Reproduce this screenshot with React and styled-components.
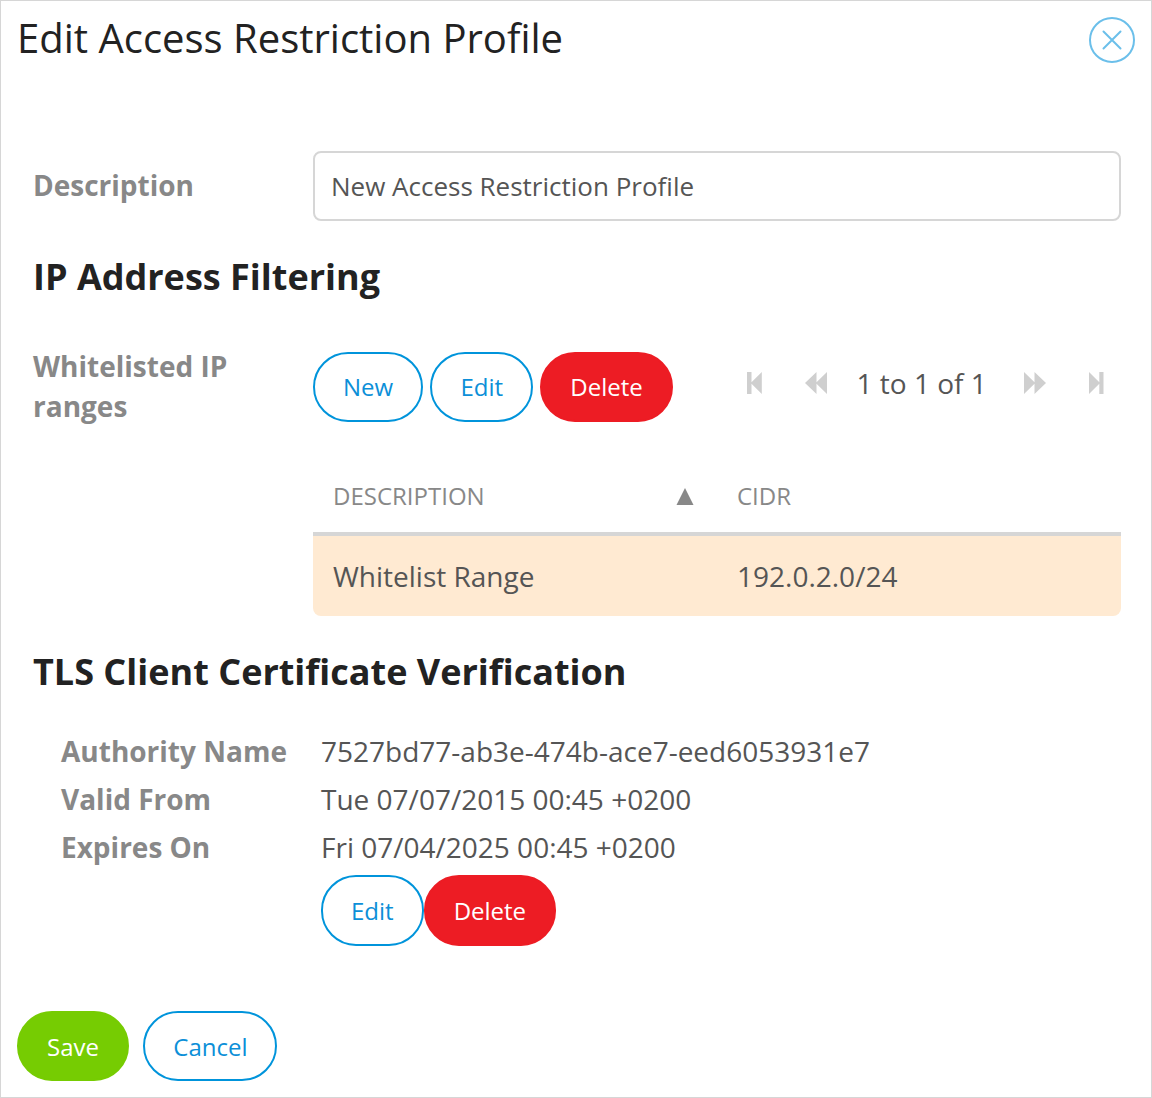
import React from 'react';
import styled, { createGlobalStyle, css } from 'styled-components';

const GlobalStyle = createGlobalStyle`
  *, *::before, *::after { box-sizing: border-box; }
  body { margin: 0; background: #fff; }
  button, input { font: inherit; }
`;

const Dialog = styled.main`
  display: flex;
  flex-direction: column;
  width: 1152px;
  height: 1098px;
  border: 1px solid #d6d6d6;
  background: #fff;
  color: #555;
  font-family: 'Open Sans', 'Noto Sans', sans-serif;
  font-size: 28px;
  line-height: 40px;
`;

const Header = styled.header`
  display: flex;
  justify-content: space-between;
  height: 150px;
  padding: 9px 16px 0 16px;
`;

const Title = styled.h1`
  margin: 0;
  color: #222;
  font-size: 40px;
  font-weight: 400;
  line-height: 56px;
`;

const CloseButton = styled.button`
  width: 46px;
  height: 46px;
  margin-top: 7px;
  padding: 0;
  border: 0;
  background: none;
  svg { display: block; }
`;

const Body = styled.div`
  flex: 1;
  padding: 0 30px 0 32px;
`;

const Field = styled.div`
  display: grid;
  grid-template-columns: 280px minmax(0, 1fr);
  align-items: ${(p) => p.$align || 'start'};
`;

const Label = styled.label`
  width: 230px;
  padding-bottom: 2px;
  color: #888;
  font-weight: 700;
`;

const TextInput = styled.input`
  width: 100%;
  height: 70px;
  padding: 0 16px;
  border: 2px solid #d6d6d6;
  border-radius: 8px;
  outline: 0;
  background: #fff;
  color: #555;
  font-size: 26px;
`;

const SectionTitle = styled.h2`
  margin: ${(p) => p.$margin};
  color: #222;
  font-size: 36px;
  font-weight: 700;
  line-height: 50px;
`;

const Toolbar = styled.div`
  display: flex;
  align-items: flex-start;
  justify-content: space-between;
  margin-top: 6px;
`;

const ButtonGroup = styled.div`
  display: flex;
  gap: ${(p) => p.$gap || 0}px;
`;

const variants = {
  outline: css`border-color: #0094db; background: #fff; color: #0c8fd8;`,
  danger: css`border-color: #ed1c24; background: #ed1c24; color: #fff;`,
  success: css`border-color: #76cc02; background: #76cc02; color: #fff;`,
};

const Button = styled.button`
  height: ${(p) => p.$height || 70}px;
  padding: ${(p) => p.$drop || 0}px 28px 0;
  border: 2px solid;
  border-radius: 35px;
  font-size: 24px;
  line-height: 34px;
  white-space: nowrap;
  ${(p) => variants[p.$variant || 'outline']}
`;

const Pager = styled.nav`
  display: flex;
  align-items: center;
  height: 62px;
  padding-right: 17.5px;
  color: #555;
`;

const PageIcon = styled.svg`
  display: block;
  flex: none;
  fill: #cfcfcf;
`;

const PageText = styled.span`
  width: 128px;
  margin: 0 39px 1px 29.5px;
  white-space: nowrap;
`;

const Gap = styled.span`
  width: ${(p) => p.$size}px;
`;

const Table = styled.div`
  margin-top: 35px;
`;

const TableRow = styled.div`
  display: grid;
  grid-template-columns: 1fr 1fr;
  align-items: center;
`;

const TableHead = styled(TableRow)`
  height: 79px;
  padding-top: 2px;
  border-bottom: 4px solid #d6d6d6;
  color: #888;
  font-size: 24px;
`;

const SelectedRow = styled(TableRow)`
  height: 80px;
  border-radius: 0 0 8px 8px;
  background: #ffead2;
`;

const Cell = styled.div`
  display: flex;
  justify-content: space-between;
  align-items: center;
  padding: 0 23px 0 20px;
`;

const SortIcon = styled.svg`
  display: block;
  margin-top: 2px;
  fill: #888;
`;

const Details = styled.dl`
  display: grid;
  grid-template-columns: 260px 1fr;
  margin: 0 0 0 28px;
  line-height: 48px;
`;

const Term = styled.dt`
  color: #888;
  font-weight: 700;
`;

const Value = styled.dd`
  margin: 0;
`;

const CertificateActions = styled.div`
  margin: 4px 0 0 288px;
`;

const Footer = styled.footer`
  display: flex;
  gap: 14.3px;
  padding: 0 0 16px 16px;
`;

const certificate = [
  ['Authority Name', '7527bd77-ab3e-474b-ace7-eed6053931e7'],
  ['Valid From', 'Tue 07/07/2015 00:45 +0200'],
  ['Expires On', 'Fri 07/04/2025 00:45 +0200'],
];

function FirstIcon({ flip }) {
  return (
    <PageIcon width="15" height="22" viewBox="0 0 15 22">
      <path d={flip ? 'M0 0L10.3 10.3V0H14.5V22H10.3V11.7L0 22Z' : 'M0 0H4.5V10.3L14.8 0V22L4.5 11.7V22H0Z'} />
    </PageIcon>
  );
}

function SkipIcon({ flip }) {
  return (
    <PageIcon width="22" height="22" viewBox="0 0 22 22">
      <path d={flip ? 'M0 0L10.5 10.3V0L22 11L10.5 22V11.7L0 22Z' : 'M22 0L11.5 10.3V0L0 11L11.5 22V11.7L22 22Z'} />
    </PageIcon>
  );
}

export default function App() {
  return (
    <>
      <GlobalStyle />
      <Dialog>
        <Header>
          <Title>Edit Access Restriction Profile</Title>
          <CloseButton aria-label="Close">
            <svg width="46" height="46" viewBox="0 0 46 46" fill="none" stroke="#6bbfea" strokeWidth="2">
              <circle cx="23" cy="23" r="22" />
              <path d="M14.5 14.5L31.5 31.5M31.5 14.5L14.5 31.5" strokeLinecap="round" />
            </svg>
          </CloseButton>
        </Header>
        <Body>
          <Field $align="center">
            <Label htmlFor="description">Description</Label>
            <TextInput id="description" defaultValue="New Access Restriction Profile" />
          </Field>
          <SectionTitle $margin="31px 0 44px">IP Address Filtering</SectionTitle>
          <Field>
            <Label as="div">Whitelisted IP ranges</Label>
            <div>
              <Toolbar>
                <ButtonGroup $gap={7.28}>
                  <Button>New</Button>
                  <Button>Edit</Button>
                  <Button $variant="danger">Delete</Button>
                </ButtonGroup>
                <Pager>
                  <FirstIcon />
                  <Gap $size={43.2} />
                  <SkipIcon />
                  <PageText>1 to 1 of 1</PageText>
                  <SkipIcon flip />
                  <Gap $size={43} />
                  <FirstIcon flip />
                </Pager>
              </Toolbar>
              <Table>
                <TableHead>
                  <Cell>
                    <span>DESCRIPTION</span>
                    <SortIcon width="18" height="17" viewBox="0 0 18 17"><path d="M9 0L17.5 17H0.5Z" /></SortIcon>
                  </Cell>
                  <Cell>CIDR</Cell>
                </TableHead>
                <SelectedRow>
                  <Cell>Whitelist Range</Cell>
                  <Cell>192.0.2.0/24</Cell>
                </SelectedRow>
              </Table>
            </div>
          </Field>
          <SectionTitle $margin="31px 0 30px">TLS Client Certificate Verification</SectionTitle>
          <Details>
            {certificate.map(([term, value]) => (
              <React.Fragment key={term}>
                <Term>{term}</Term>
                <Value>{value}</Value>
              </React.Fragment>
            ))}
          </Details>
          <CertificateActions>
            <ButtonGroup>
              <Button $height={71}>Edit</Button>
              <Button $height={71} $variant="danger">Delete</Button>
            </ButtonGroup>
          </CertificateActions>
        </Body>
        <Footer>
          <Button $drop={2} $variant="success">Save</Button>
          <Button $drop={2}>Cancel</Button>
        </Footer>
      </Dialog>
    </>
  );
}
